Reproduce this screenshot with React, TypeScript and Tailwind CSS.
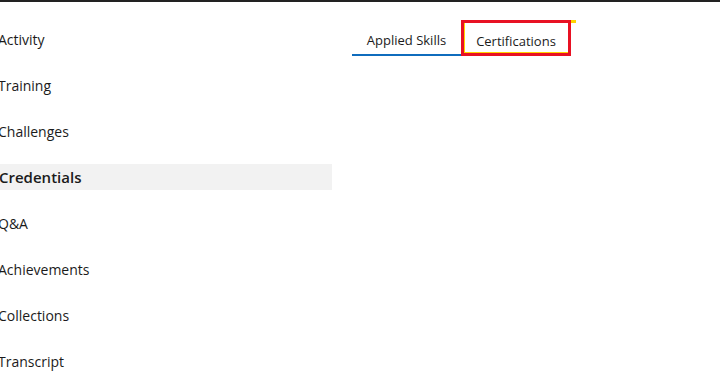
const navItems = [
  "Activity",
  "Training",
  "Challenges",
  "Credentials",
  "Q&A",
  "Achievements",
  "Collections",
  "Transcript",
];

export default function App() {
  return (
    <div
      className="w-[720px] h-[371px] overflow-hidden bg-white border-t-2 border-[#222222] text-[#1b1b1b]"
      style={{ fontFamily: '"Segoe UI", "Open Sans", "Noto Sans", sans-serif' }}
    >
      <div className="flex">
        {/* Side nav */}
        <nav className="w-[332px] shrink-0 pt-[24px] flex flex-col gap-[20px]">
          {navItems.map((item) => (
            <div
              key={item}
              className={
                item === "Credentials"
                  ? "h-[26px] flex items-center bg-[#f2f2f2] font-semibold text-[15px] -ml-[2px] pt-[1px]"
                  : "h-[26px] flex items-center text-[14px] -ml-[2px]"
              }
            >
              <span className={item === "Credentials" ? "ml-[1px]" : ""}>{item}</span>
            </div>
          ))}
        </nav>

        {/* Tabs */}
        <div className="ml-[20px] pt-[18px]">
          <div className="flex">
            <div className="h-[36px] w-[109px] flex items-center justify-center pt-[7px] text-[13px] border-b-2 border-[#0f6cbd]">
              Applied Skills
            </div>
            <div className="relative h-[36px] w-[110px] flex items-center justify-center pt-[7px] text-[13px]">
              Certifications
              <span className="absolute inset-0 border-[3px] border-[#e81123] shadow-[inset_1px_-1px_0_#ffd400]" />
              <span className="absolute top-0 right-[-5px] w-[5px] h-[3px] bg-[#ffd400]" />
            </div>
          </div>
        </div>
      </div>
    </div>
  );
}
